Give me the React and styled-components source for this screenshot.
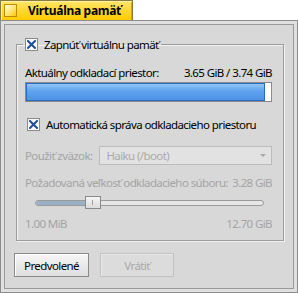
import React from 'react';
import styled, { createGlobalStyle } from 'styled-components';

const Global = createGlobalStyle`
  html, body {
    margin: 0;
    padding: 0;
    background: #ffffff;
  }
  body {
    font-family: "Noto Sans", "DejaVu Sans", sans-serif;
    font-size: 11.5px;
    letter-spacing: -0.6px;
    color: #000;
  }
`;

const Window = styled.div`
  width: 298px;
  height: 293px;
  display: flex;
  flex-direction: column;
`;

const Tab = styled.div`
  width: 133px;
  height: 20px;
  box-sizing: border-box;
  border: 1px solid #8a7a40;
  border-bottom: none;
  background: linear-gradient(180deg, #ffe56a 0%, #ffcb00 100%);
  box-shadow: inset 1px 1px 0 #fff2a8, inset -1px 0 0 #d8a400;
  display: flex;
  align-items: center;
  padding-left: 3px;
`;

const CloseBox = styled.div`
  width: 13px;
  height: 13px;
  box-sizing: border-box;
  border: 1px solid #b89000;
  background: linear-gradient(135deg, #fffbe0 0%, #ffe680 50%, #ffcb00 100%);
`;

const Title = styled.span`
  flex: 1;
  text-align: center;
  font-weight: bold;
  font-size: 12px;
  letter-spacing: -0.3px;
  padding-right: 0;
`;

const Frame = styled.div`
  flex: 1;
  box-sizing: border-box;
  border: 1px solid #8c8c8c;
  background: #e0e0e0;
  padding: 3px;
  display: flex;
`;

const Panel = styled.div`
  flex: 1;
  min-width: 0;
  border: 1px solid #9a9a9a;
  background: #d8d8d8;
  display: flex;
  flex-direction: column;
`;

const Group = styled.fieldset`
  min-width: 0;
  margin: 12px 9px 0 11px;
  padding: 0 11px 10px 8px;
  border: 1px solid #9c9c9c;
  box-shadow: 1px 1px 0 #f2f2f2, inset 1px 1px 0 #f2f2f2;
  display: flex;
  flex-direction: column;
`;

const Legend = styled.legend`
  margin-left: -2px;
  padding: 0 2px;
  display: flex;
  align-items: center;
  height: 14px;
`;

const CheckRow = styled.label`
  display: flex;
  align-items: center;
  gap: 6px;
  height: 14px;
  margin-top: ${({ $top }) => $top || 0}px;
  margin-left: ${({ $indent }) => $indent || 0}px;
  color: ${({ $disabled }) => ($disabled ? '#a0a0a0' : '#000')};
  white-space: nowrap;
`;

const Box = styled.span`
  width: 13px;
  height: 13px;
  box-sizing: border-box;
  border: 1px solid #8a8a8a;
  background: linear-gradient(135deg, #f4f4f4 0%, #ffffff 100%);
  display: flex;
  align-items: center;
  justify-content: center;
  flex-shrink: 0;
`;

const Row = styled.div`
  display: flex;
  align-items: center;
  justify-content: space-between;
  height: 14px;
  margin-top: ${({ $top }) => $top || 0}px;
  color: ${({ $disabled }) => ($disabled ? '#a4a4a4' : '#000')};
  white-space: nowrap;
`;

const Bar = styled.div`
  margin-top: 3px;
  height: 20px;
  box-sizing: border-box;
  border: 1px solid #8a8a8a;
  background: #ffffff;
  display: flex;
`;

const BarFill = styled.div`
  height: 100%;
  box-sizing: border-box;
  border: 1px solid #2a6cc0;
  background: linear-gradient(180deg, #92c4f6 0%, #5ea2ee 45%, #4d93e6 100%);
`;

const VolumeRow = styled.div`
  display: flex;
  align-items: center;
  height: 19px;
  margin-top: 15px;
  gap: 7px;
  color: #a4a4a4;
  white-space: nowrap;
`;

const Select = styled.div`
  flex: 1;
  height: 19px;
  box-sizing: border-box;
  border: 1px solid #bcbcbc;
  background: #e2e2e2;
  display: flex;
  align-items: center;
  justify-content: space-between;
  padding: 0 5px 0 6px;
  color: #aaaaaa;
`;

const Arrow = styled.span`
  width: 0;
  height: 0;
  border-left: 3px solid transparent;
  border-right: 3px solid transparent;
  border-top: 3px solid #a8a8a8;
`;

const SliderWrap = styled.div`
  margin-top: 7px;
  height: 14px;
  padding: 0 8px 0 10px;
  display: flex;
  align-items: center;
`;

const Track = styled.div`
  flex: 1;
  height: 6px;
  box-sizing: border-box;
  border: 1px solid #9a9a9a;
  border-radius: 3px;
  background: #e6e6e6;
  display: flex;
  align-items: center;
  position: relative;
`;

const TrackFill = styled.div`
  height: 100%;
  background: #9ab0c4;
  border-radius: 2px 0 0 2px;
`;

const Thumb = styled.div`
  position: absolute;
  top: -5px;
  width: 16px;
  height: 13px;
  box-sizing: border-box;
  border: 1px solid #8a8a8a;
  background: linear-gradient(180deg, #f4f4f4 0%, #dcdcdc 100%);
  display: flex;
  align-items: center;
  justify-content: center;
  &::after {
    content: '';
    width: 1px;
    height: 5px;
    background: #a0a0a0;
  }
`;

const Buttons = styled.div`
  display: flex;
  gap: 11px;
  margin: 12px 0 0 9px;
`;

const Button = styled.button`
  width: ${({ $w }) => $w}px;
  height: 24px;
  box-sizing: border-box;
  font: inherit;
  letter-spacing: inherit;
  border: 1px solid ${({ disabled }) => (disabled ? '#c2c2c2' : '#8a8a8a')};
  background: ${({ disabled }) =>
    disabled ? '#dcdcdc' : 'linear-gradient(180deg, #f6f6f6 0%, #dedede 100%)'};
  box-shadow: ${({ disabled }) =>
    disabled ? 'inset 1px 1px 0 #e8e8e8' : 'inset 1px 1px 0 #ffffff'};
  color: ${({ disabled }) => (disabled ? '#a8a8a8' : '#000')};
  padding: 0;
`;

const XMark = () => (
  <svg width="9" height="9" viewBox="0 0 9 9">
    <path d="M1 1L8 8M8 1L1 8" stroke="#1f4e9c" strokeWidth="2" strokeLinecap="square" />
  </svg>
);

export default function App() {
  const used = 3.65;
  const total = 3.74;
  const sizePct = 22;
  return (
    <Window>
      <Global />
      <Tab>
        <CloseBox />
        <Title>Virtuálna pamäť</Title>
      </Tab>
      <Frame>
        <Panel>
          <Group>
            <Legend>
              <CheckRow>
                <Box><XMark /></Box>
                Zapnúť virtuálnu pamäť
              </CheckRow>
            </Legend>
            <Row $top={14}>
              <span>Aktuálny odkladací priestor:</span>
              <span>3.65 GiB / 3.74 GiB</span>
            </Row>
            <Bar>
              <BarFill style={{ width: `${(used / total) * 100}%` }} />
            </Bar>
            <CheckRow $top={15} $indent={2}>
              <Box><XMark /></Box>
              Automatická správa odkladacieho priestoru
            </CheckRow>
            <VolumeRow>
              <span>Použiť zväzok:</span>
              <Select>
                <span>Haiku (/boot)</span>
                <Arrow />
              </Select>
            </VolumeRow>
            <Row $top={10} $disabled>
              <span>Požadovaná veľkosť odkladacieho súboru:</span>
              <span>3.28 GiB</span>
            </Row>
            <SliderWrap>
              <Track>
                <TrackFill style={{ width: `${sizePct}%` }} />
                <Thumb style={{ left: `calc(${sizePct}% - 1px)` }} />
              </Track>
            </SliderWrap>
            <Row $top={6} $disabled>
              <span>1.00 MiB</span>
              <span>12.70 GiB</span>
            </Row>
          </Group>
          <Buttons>
            <Button $w={75}>Predvolené</Button>
            <Button $w={74} disabled>Vrátiť</Button>
          </Buttons>
        </Panel>
      </Frame>
    </Window>
  );
}
